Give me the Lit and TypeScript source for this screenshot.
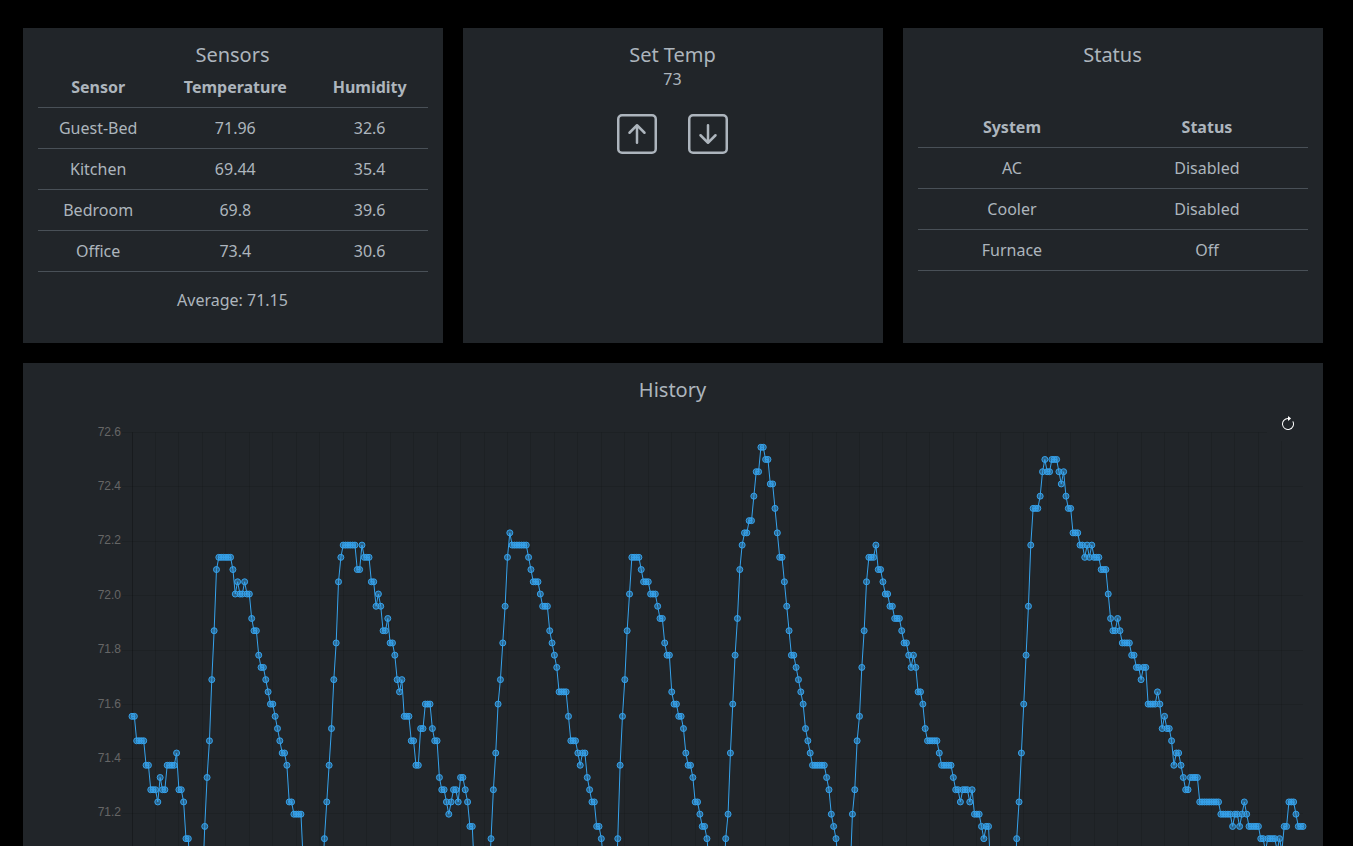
import { LitElement, html, svg, css } from "lit";
import { customElement, property, state } from "lit/decorators.js";

interface Reading {
  sensor: string;
  temperature: number;
  humidity: number;
}

const READINGS: Reading[] = [
  { sensor: "Guest-Bed", temperature: 71.96, humidity: 32.6 },
  { sensor: "Kitchen", temperature: 69.44, humidity: 35.4 },
  { sensor: "Bedroom", temperature: 69.8, humidity: 39.6 },
  { sensor: "Office", temperature: 73.4, humidity: 30.6 },
];

const SYSTEMS = [
  { name: "AC", status: "Disabled" },
  { name: "Cooler", status: "Disabled" },
  { name: "Furnace", status: "Off" },
];

// Logged temperatures, run-length encoded as [sensor steps below the peak, samples].
const PEAK = 72.545;
const SENSOR_STEP = 0.045;
const LOG: [number, number][] = [
  [22, 2], [24, 4], [26, 2], [28, 3], [29, 1], [27, 1], [28, 2], [26, 4], [25, 1], [28, 2], [29, 1], [32, 2],
  [36, 1], [37, 2], [38, 2], [36, 1],
  [31, 1], [27, 1], [24, 1], [19, 1], [15, 1], [10, 1], [9, 6], [10, 1], [12, 1], [11, 1], [12, 2], [11, 1], [12, 2],
  [14, 1], [15, 2], [17, 1], [18, 2], [19, 1], [20, 1], [21, 2], [22, 1], [23, 1], [24, 1], [25, 2], [26, 1], [29, 2], [30, 4],
  [34, 1], [35, 2], [36, 2], [37, 2], [38, 1], [36, 1],
  [32, 1], [29, 1], [26, 1], [23, 1], [19, 1], [16, 1], [11, 1], [9, 1], [8, 6], [10, 2], [8, 1], [9, 3], [11, 2],
  [13, 1], [12, 1], [13, 1], [15, 2], [14, 1], [16, 2], [17, 1], [19, 1], [20, 1], [19, 1], [22, 3], [24, 2], [26, 2],
  [23, 2], [21, 3], [23, 1], [24, 2], [27, 1], [28, 2], [29, 1], [30, 1], [29, 1], [28, 2], [29, 1], [27, 2], [28, 1],
  [29, 1], [31, 2],
  [35, 1], [36, 2], [37, 2], [38, 1], [36, 1],
  [32, 1], [28, 1], [25, 1], [21, 1], [19, 1], [16, 1], [13, 1], [9, 1], [7, 1], [8, 7], [9, 1], [10, 1], [11, 3], [12, 1],
  [13, 3], [15, 1], [16, 1], [17, 1], [18, 1], [20, 4], [22, 1], [24, 3], [25, 1], [26, 1], [25, 2], [27, 1], [28, 1],
  [29, 2], [31, 2], [32, 1],
  [34, 1], [36, 2], [37, 2], [38, 1],
  [32, 1], [26, 1], [22, 1], [19, 1], [15, 1], [12, 1], [9, 4], [10, 1], [11, 3], [12, 3], [13, 1], [14, 2], [16, 1],
  [17, 2], [20, 1], [21, 2], [22, 2], [23, 1], [25, 1], [26, 2], [27, 1], [29, 2], [30, 1], [31, 2], [32, 1],
  [34, 1], [35, 2], [36, 2], [37, 1], [36, 1],
  [32, 1], [30, 1], [25, 1], [21, 1], [17, 1], [14, 1], [10, 1], [8, 1], [7, 2], [6, 2], [4, 1], [2, 2], [0, 2], [1, 2],
  [3, 2], [5, 1], [7, 1], [9, 2], [11, 1], [13, 1], [15, 1], [17, 2], [18, 1], [19, 1], [20, 1], [21, 1], [23, 1],
  [24, 1], [25, 1], [26, 6], [27, 1], [28, 1], [30, 1], [31, 1], [32, 1],
  [34, 1], [36, 2], [37, 2], [35, 1],
  [30, 1], [28, 1], [24, 1], [22, 1], [18, 1], [15, 1], [11, 1], [9, 3], [8, 1], [10, 2], [11, 1], [12, 2], [13, 2],
  [14, 3], [15, 1], [16, 2], [17, 1], [18, 1], [17, 1], [18, 1], [20, 2], [21, 1], [23, 1], [24, 5], [25, 1], [26, 5],
  [27, 1], [28, 2], [29, 1], [28, 3], [29, 1], [28, 1], [30, 3], [31, 1], [32, 1], [31, 2],
  [35, 1], [36, 3], [37, 4], [38, 2], [37, 1],
  [32, 1], [29, 1], [25, 1], [21, 1], [17, 1], [13, 1], [8, 1], [5, 3], [4, 1], [2, 1], [1, 1], [2, 2], [1, 3], [2, 1],
  [3, 1], [2, 1], [4, 1], [5, 2], [7, 3], [8, 2], [9, 1], [8, 1], [9, 1], [8, 1], [9, 3], [10, 3], [12, 1], [14, 1],
  [15, 2], [14, 1], [15, 1], [16, 4], [17, 2], [18, 2], [19, 1], [18, 2], [21, 4], [20, 1], [21, 1], [23, 1], [22, 1],
  [23, 2], [24, 1], [26, 1], [25, 2], [26, 1], [27, 1], [28, 2], [27, 4], [29, 9], [30, 5], [31, 1], [30, 2], [31, 1],
  [30, 1], [29, 1], [30, 1], [31, 5], [32, 2], [33, 1], [32, 4], [33, 1], [32, 1], [33, 1], [31, 2], [29, 3], [30, 1],
  [31, 3],
];

const HISTORY: number[] = LOG.flatMap(([steps, samples]) =>
  Array<number>(samples).fill(PEAK - steps * SENSOR_STEP)
);

const CHART = {
  width: 1270,
  height: 600,
  left: 94,
  right: 1265,
  top: 30.3,
  bottom: 575,
  max: 72.6,
  tick: 0.2,
  tickGap: 54.36,
  ticks: 8,
  samplesPerLine: 10,
};

@customElement("history-chart")
export class HistoryChart extends LitElement {
  @property({ attribute: false }) values: number[] = [];

  static styles = css`
    :host {
      display: block;
    }
    .plot {
      display: block;
      width: 100%;
      height: auto;
    }
    .grid {
      stroke: rgba(0, 0, 0, 0.1);
    }
    .axis {
      stroke: rgba(0, 0, 0, 0.25);
    }
    .label {
      fill: #666;
      font: 12px "Liberation Sans", Arial, sans-serif;
      text-anchor: end;
    }
    .line {
      fill: none;
      stroke: #36a2eb;
      stroke-width: 1;
      stroke-linejoin: round;
    }
    .point {
      fill: rgba(54, 162, 235, 0.5);
      stroke: #36a2eb;
      stroke-width: 1;
    }
  `;

  render() {
    const c = CHART;
    const step = (c.right - c.left) / Math.max(1, this.values.length - 1);
    const points = this.values.map((v, i) => ({
      x: c.left + i * step,
      y: c.top + ((c.max - v) / c.tick) * c.tickGap,
    }));
    const rows = Array.from({ length: c.ticks }, (_, k) => ({
      y: Math.floor(c.top + 0.3 + k * c.tickGap) + 0.5,
      baseline: Math.floor(c.top + k * (c.tickGap - 0.02)) + 4,
      text: (c.max - k * c.tick).toFixed(1),
    }));
    const columns = points.filter((_, i) => i > 0 && i % c.samplesPerLine === 0);
    const axis = Math.floor(c.left) + 0.5;
    return html`
      <svg class="plot" viewBox="0 0 ${c.width} ${c.height}" role="img" aria-label="Temperature history">
        ${columns.map((p) => {
          const x = Math.floor(p.x) + 0.5;
          return svg`<line class="grid" x1=${x} x2=${x} y1=${c.top} y2=${c.bottom} />`;
        })}
        ${rows.map(
          (r) => svg`
            <line class="grid" x1=${c.left - 10} x2=${c.right} y1=${r.y} y2=${r.y} />
            <text class="label" x="83" y=${r.baseline}>${r.text}</text>`
        )}
        <line class="axis" x1=${axis} x2=${axis} y1=${c.top} y2=${c.bottom} />
        <polyline class="line" points=${points.map((p) => `${p.x.toFixed(2)},${p.y.toFixed(2)}`).join(" ")} />
        ${points.map((p) => svg`<circle class="point" cx=${p.x.toFixed(2)} cy=${p.y.toFixed(2)} r="3" />`)}
      </svg>
    `;
  }
}

@customElement("app-root")
export class AppRoot extends LitElement {
  @state() private target = 73;

  static styles = css`
    :host {
      display: block;
      box-sizing: border-box;
      height: 100vh;
      overflow-y: auto;
      scrollbar-width: none;
      padding: 28px 30px 0 22px;
      background: #000;
      color: #adb5bd;
      font: 16px/24px "Noto Sans", sans-serif;
      text-align: center;
    }
    .cards {
      display: grid;
      grid-template-columns: repeat(3, minmax(0, 1fr));
      gap: 20px;
      max-width: 1300px;
      margin: 0 auto;
    }
    .card {
      position: relative;
      padding: 15px;
      background: #212529;
    }
    .history {
      grid-column: 1 / -1;
    }
    h2 {
      margin: 0;
      font-size: 20px;
      line-height: 24px;
      font-weight: 400;
    }
    p {
      margin: 0;
    }
    table {
      width: 100%;
      border-collapse: collapse;
    }
    th,
    td {
      padding: 8px;
      border-bottom: 1px solid #495057;
    }
    .readings {
      margin-bottom: 16px;
    }
    .average {
      margin-bottom: 16px;
    }
    .systems {
      margin-top: 40px;
    }
    button {
      padding: 0;
      border: 0;
      background: none;
      color: inherit;
      cursor: pointer;
    }
    button svg {
      display: block;
    }
    .controls {
      display: flex;
      justify-content: center;
      gap: 31px;
      margin-top: 23px;
    }
    .refresh {
      position: absolute;
      top: 40px;
      right: 14px;
      padding: 13px 13px 9px;
      background: #212529;
      color: #fff;
    }
  `;

  private nudge(by: number) {
    this.target += by;
  }

  render() {
    const sum = READINGS.reduce((total, r) => total + r.temperature, 0);
    return html`
      <main class="cards">
        <section class="card">
          <h2>Sensors</h2>
          <table class="readings">
            <thead>
              <tr><th scope="col">Sensor</th><th scope="col">Temperature</th><th scope="col">Humidity</th></tr>
            </thead>
            <tbody>
              ${READINGS.map(
                (r) => html`<tr><td>${r.sensor}</td><td>${r.temperature}</td><td>${r.humidity}</td></tr>`
              )}
            </tbody>
          </table>
          <p class="average">Average: ${(sum / READINGS.length).toFixed(2)}</p>
        </section>

        <section class="card">
          <h2>Set Temp</h2>
          <p>${this.target}</p>
          <div class="controls">
            <button type="button" aria-label="Raise temperature" @click=${() => this.nudge(1)}>
              <svg width="40" height="40" viewBox="0 0 16 16" fill="currentColor">
                <path fill-rule="evenodd" d="M15 2a1 1 0 0 0-1-1H2a1 1 0 0 0-1 1v12a1 1 0 0 0 1 1h12a1 1 0 0 0 1-1V2zM0 2a2 2 0 0 1 2-2h12a2 2 0 0 1 2 2v12a2 2 0 0 1-2 2H2a2 2 0 0 1-2-2V2zm8.5 9.5a.5.5 0 0 1-1 0V5.707L5.354 7.854a.5.5 0 1 1-.708-.708l3-3a.5.5 0 0 1 .708 0l3 3a.5.5 0 0 1-.708.708L8.5 5.707V11.5z" />
              </svg>
            </button>
            <button type="button" aria-label="Lower temperature" @click=${() => this.nudge(-1)}>
              <svg width="40" height="40" viewBox="0 0 16 16" fill="currentColor">
                <path fill-rule="evenodd" d="M15 2a1 1 0 0 0-1-1H2a1 1 0 0 0-1 1v12a1 1 0 0 0 1 1h12a1 1 0 0 0 1-1V2zM0 2a2 2 0 0 1 2-2h12a2 2 0 0 1 2 2v12a2 2 0 0 1-2 2H2a2 2 0 0 1-2-2V2zm8.5 2.5a.5.5 0 0 0-1 0v5.793L5.354 8.146a.5.5 0 1 0-.708.708l3 3a.5.5 0 0 0 .708 0l3-3a.5.5 0 0 0-.708-.708L8.5 10.293V4.5z" />
              </svg>
            </button>
          </div>
        </section>

        <section class="card">
          <h2>Status</h2>
          <table class="systems">
            <thead>
              <tr><th scope="col">System</th><th scope="col">Status</th></tr>
            </thead>
            <tbody>
              ${SYSTEMS.map((s) => html`<tr><td>${s.name}</td><td>${s.status}</td></tr>`)}
            </tbody>
          </table>
        </section>

        <section class="card history">
          <h2>History</h2>
          <history-chart .values=${HISTORY}></history-chart>
          <button class="refresh" type="button" aria-label="Refresh history">
            <svg width="16" height="16" viewBox="0 0 16 16" fill="currentColor">
              <path fill-rule="evenodd" d="M8 3a5 5 0 1 0 4.546 2.914.5.5 0 0 1 .908-.417A6 6 0 1 1 8 2v1z" />
              <path d="M8 4.466V.534a.25.25 0 0 1 .41-.192l2.36 1.966c.12.1.12.284 0 .384L8.41 4.658A.25.25 0 0 1 8 4.466z" />
            </svg>
          </button>
        </section>
      </main>
    `;
  }
}
